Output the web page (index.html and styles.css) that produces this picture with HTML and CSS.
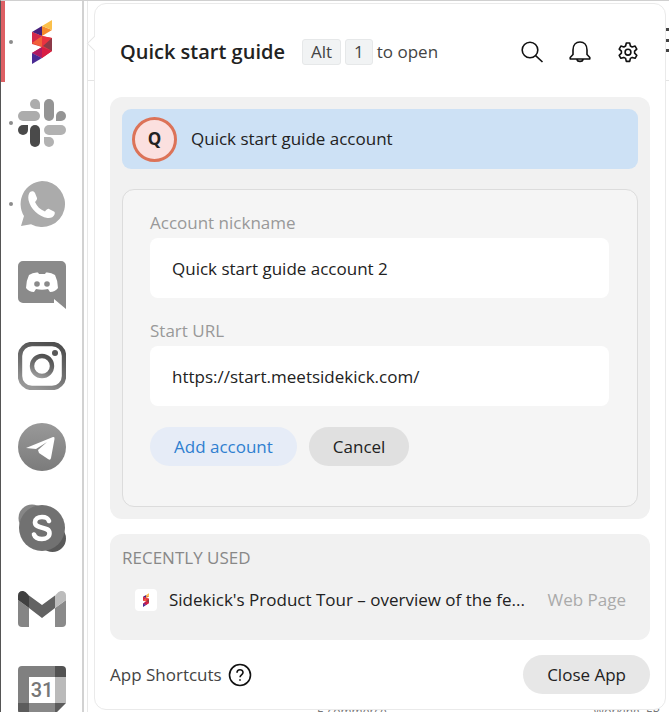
FILE: index.html
```html
<!DOCTYPE html>
<html lang="en">
<head>
    <meta charset="UTF-8">
    <meta name="viewport" content="width=device-width, initial-scale=1.0">
    <title>Quick start guide</title>
    <link rel="stylesheet" href="styles.css">
</head>
<body>
    <!-- shared logo shape -->
    <svg class="defs" aria-hidden="true">
        <symbol id="sidekick" viewBox="0 0 20 44">
            <path fill="#e03a3f" d="M0 12 10 16 20 18V31L10 38 0 33 10 27 0 24z"/>
            <path fill="#47207c" d="M0 12 10 6V16z"/>
            <path fill="#f58a2c" d="M10 6 20 10 10 16z"/>
            <path fill="#fbc04a" d="M10 6 20 0V10z"/>
            <path fill="#d3284a" d="M0 12 10 16 0 23z"/>
            <path fill="#f2603a" d="M10 16V27L0 23z"/>
            <path fill="#ea3340" d="M10 16 20 18 10 27z"/>
            <path fill="#8b3a48" d="M20 18V31L11 26z"/>
            <path fill="#d91c44" d="M10 27 20 31 10 38z"/>
            <path fill="#b01a62" d="M10 27V38L0 33z"/>
            <path fill="#4a2a94" d="M0 33 10 38 0 44z"/>
        </symbol>
    </svg>

    <nav class="rail" aria-label="Apps">
        <a class="app active open" href="#" aria-label="Quick start guide">
            <svg class="app-icon" viewBox="0 0 48 48"><use href="#sidekick" x="14" y="2" width="20" height="44"/></svg>
        </a>
        <a class="app open" href="#" aria-label="Slack">
            <svg class="app-icon" viewBox="0 0 48 48">
                <path fill="#acacac" d="M17 0a5 5 0 0 0 0 10h5V5a5 5 0 0 0-5-5z"/>
                <rect fill="#acacac" y="12" width="22" height="10" rx="5"/>
                <rect fill="#949494" x="26" width="10" height="22" rx="5"/>
                <path fill="#949494" d="M48 17a5 5 0 0 0-10 0v5h5a5 5 0 0 0 5-5z"/>
                <path fill="#4a4a4a" d="M0 31a5 5 0 0 0 10 0v-5H5a5 5 0 0 0-5 5z"/>
                <rect fill="#4a4a4a" x="12" y="26" width="10" height="22" rx="5"/>
                <rect fill="#b2b2b2" x="26" y="26" width="22" height="10" rx="5"/>
                <path fill="#b2b2b2" d="M31 48a5 5 0 0 0 0-10h-5v5a5 5 0 0 0 5 5z"/>
            </svg>
        </a>
        <a class="app open" href="#" aria-label="WhatsApp">
            <svg class="app-icon" viewBox="0 0 48 48">
                <path fill="#ababab" d="M24 1a23 23 0 1 1-11 43.200L3 46l3-10A23 23 0 0 1 24 1z"/>
                <path fill="#fff" d="M12 12c2-1.500 4-1 5 1l2 5c.4 1-.5 2.500-2 4 2 4.500 5 7.500 10 9.500 1.500-2 3-3 4-2.600l5 2.500c1 .6 1 1.600.5 3-1 2.600-4 4-7 3.500-9-1.500-17-9-19-18-.6-3 .1-6.500 1.500-7.900z"/>
            </svg>
        </a>
        <a class="app" href="#" aria-label="Discord">
            <svg class="app-icon" viewBox="0 0 48 48">
                <path fill="#8a8a8a" d="M5 0h38a5 5 0 0 1 5 5v43L36 38v4H5a5 5 0 0 1-5-5V5a5 5 0 0 1 5-5z"/>
                <path fill="#fff" d="M11 14q4-3 9-2.500l1 1.500h6l1-1.500q5-.5 9 2.500 3 6 3 13-3 4-8 4l-2-3q-6 1.500-12 0l-2 3q-5 0-8-4 0-7 3-13z"/>
                <circle fill="#8a8a8a" cx="19" cy="23" r="2.800"/>
                <circle fill="#8a8a8a" cx="29" cy="23" r="2.800"/>
            </svg>
        </a>
        <a class="app" href="#" aria-label="Instagram">
            <svg class="app-icon" viewBox="0 0 48 48">
                <defs>
                    <linearGradient id="insta" x1="0.700" y1="0" x2="0.300" y2="1">
                        <stop offset="0" stop-color="#505050"/>
                        <stop offset="0.600" stop-color="#727272"/>
                        <stop offset="1" stop-color="#989898"/>
                    </linearGradient>
                </defs>
                <rect x="2" y="2" width="44" height="44" rx="12" fill="none" stroke="url(#insta)" stroke-width="4.400"/>
                <circle cx="24" cy="24" r="10" fill="none" stroke="url(#insta)" stroke-width="4.400"/>
                <circle cx="37" cy="11" r="3" fill="#585858"/>
            </svg>
        </a>
        <a class="app" href="#" aria-label="Telegram">
            <svg class="app-icon" viewBox="0 0 48 48">
                <defs>
                    <linearGradient id="tele" x1="0" y1="0" x2="0" y2="1">
                        <stop offset="0" stop-color="#999"/>
                        <stop offset="1" stop-color="#7b7b7b"/>
                    </linearGradient>
                </defs>
                <circle cx="24" cy="24" r="24" fill="url(#tele)"/>
                <path fill="#fff" d="M8 25 35 14q2-.4 1.500 2L33 35q-.6 3-3 1l-9-6-1-3 9-8-11 7z"/>
            </svg>
        </a>
        <a class="app" href="#" aria-label="Skype">
            <svg class="app-icon" viewBox="0 0 48 48">
                <circle cx="14" cy="14" r="13.500" fill="#868686"/>
                <circle cx="34.500" cy="34.500" r="13.500" fill="#595959"/>
                <circle cx="24" cy="24" r="23" fill="#717171"/>
                <path fill="none" stroke="#fff" stroke-width="4.600" stroke-linecap="round" d="M31 17c-1-3-4-4-7-4-4 0-7 2-7 5.200 0 7.800 14.500 3.200 14.500 11 0 3.600-3.500 5.800-7.500 5.800s-7-1.500-8-4.500"/>
            </svg>
        </a>
        <a class="app" href="#" aria-label="Gmail">
            <svg class="app-icon" viewBox="0 0 48 48">
                <path fill="#858585" d="M0 15l11 8v19H4a4 4 0 0 1-4-4z"/>
                <path fill="#8a8a8a" d="M48 15l-11 8v19h7a4 4 0 0 0 4-4z"/>
                <path fill="#626262" d="M11 10.500 24 20l13-9.500V23L24 33 11 23z"/>
                <path fill="#404040" d="M0 15v-4.500C0 6 5 4.500 8.500 8L11 10.500V23z"/>
                <path fill="#bcbcbc" d="M48 15v-4.500C48 6 43 4.500 39.500 8L37 10.500V23z"/>
            </svg>
        </a>
        <a class="app" href="#" aria-label="Google Calendar">
            <svg class="app-icon" viewBox="0 0 48 48">
                <path fill="#808080" d="M4 0h33v11H11v26H0V4a4 4 0 0 1 4-4z"/>
                <path fill="#525252" d="M37 0h7a4 4 0 0 1 4 4v7H37z"/>
                <path fill="#bababa" d="M37 11h11v26H37z"/>
                <path fill="#888" d="M11 37h26v11H11z"/>
                <path fill="#5c5c5c" d="M0 37h11v11H4a4 4 0 0 1-4-4zM37 37h11L37 48z"/>
                <text class="cal-day" x="24" y="31" text-anchor="middle">31</text>
            </svg>
        </a>
    </nav>

    <main class="window">
        <div class="toolbar">
            <svg class="grip" viewBox="0 0 3 26"><path fill="#444" d="M0 0h3v3H0zM0 11h3v3H0zM0 21h3v3H0z"/></svg>
        </div>
        <div class="page">
            <span>E-commerce</span>
            <span>Working, ER</span>
        </div>

        <section class="popover" aria-label="Quick start guide">
            <header class="popover-header">
                <h1>Quick start guide</h1>
                <p class="shortcut"><kbd>Alt</kbd><kbd>1</kbd>to open</p>
                <div class="actions">
                    <button type="button" aria-label="Search">
                        <svg viewBox="0 0 24 24"><circle cx="10" cy="10" r="7.800"/><path d="M15.600 15.600 22.500 22"/></svg>
                    </button>
                    <button type="button" aria-label="Notifications">
                        <svg viewBox="0 0 24 24"><path d="M2.200 19h19.600v-1.500L19 14.500V10c0-5-3-8-7-8s-7 3-7 8v4.500l-2.800 3zM9 19.500c.5 2.500 5.500 2.500 6 0"/></svg>
                    </button>
                    <button type="button" aria-label="Settings">
                        <svg viewBox="0 0 24 24"><path d="M10.300 3h3.400l.7 3 1.800 1 2.900-.9 1.700 3-2.200 2.100v2l2.200 2.100-1.700 3-2.900-.9-1.800 1-.7 3h-3.400l-.7-3-1.800-1-2.900.9-1.700-3 2.200-2.100v-2L3.200 9.100l1.700-3 2.900.9 1.800-1z"/><circle cx="12" cy="12.200" r="2.900"/></svg>
                    </button>
                </div>
            </header>

            <div class="card accounts">
                <button type="button" class="account">
                    <span class="avatar">Q</span>
                    Quick start guide account
                </button>

                <form class="account-form">
                    <label for="nickname">Account nickname</label>
                    <input type="text" id="nickname" value="Quick start guide account 2">
                    <label for="url">Start URL</label>
                    <input type="text" id="url" value="https://start.meetsidekick.com/">
                    <div class="form-buttons">
                        <button type="button" class="btn btn-primary">Add account</button>
                        <button type="button" class="btn btn-dark">Cancel</button>
                    </div>
                </form>
            </div>

            <div class="card recent">
                <h2>RECENTLY USED</h2>
                <a class="recent-item" href="#">
                    <span class="favicon"><svg viewBox="0 0 20 44"><use href="#sidekick"/></svg></span>
                    <span class="recent-title">Sidekick's Product Tour – overview of the fe...</span>
                    <span class="recent-type">Web Page</span>
                </a>
            </div>

            <footer class="popover-footer">
                <a class="shortcuts" href="#">App Shortcuts
                    <svg viewBox="0 0 24 24"><circle cx="12" cy="12" r="10.500"/><path d="M9 9.800c0-4 6-4 6-.3 0 2.300-3 2.300-3 4.700"/><path d="M12 16.200v1.600"/></svg>
                </a>
                <button type="button" class="btn">Close App</button>
            </footer>
        </section>
    </main>
</body>
</html>
```

FILE: styles.css
```css
* {
    box-sizing: border-box;
}

body {
    margin: 0;
    height: 100vh;
    display: flex;
    overflow: hidden;
    background: #fff;
    border-top: 1px solid #d0d0d0;
    border-left: 1px solid #555;
    color: #222;
    font-family: "Open Sans", "Noto Sans", sans-serif;
    font-size: 17px;
    font-weight: 400;
    line-height: 24px;
}

button,
input {
    font: inherit;
    color: inherit;
    border: 0;
}

button {
    cursor: pointer;
}

a {
    color: inherit;
    text-decoration: none;
}

.defs {
    display: none;
}

/* app rail */
.rail {
    width: 83px;
    flex: none;
    border-right: 2px solid #d2d2d2;
}

.app {
    position: relative;
    display: flex;
    align-items: center;
    justify-content: center;
    height: 81px;
}

.app.active {
    box-shadow: inset 4px 0 #dd6064;
}

.app.open::before {
    content: "";
    position: absolute;
    left: 8px;
    width: 4px;
    height: 4px;
    border-radius: 50%;
    background: #8c8c8c;
}

.app-icon {
    width: 48px;
    height: 48px;
}

.cal-day {
    font: 500 20px Roboto, sans-serif;
    fill: #777;
}

/* window behind the popover */
.window {
    position: relative;
    flex: 1;
    min-width: 0;
    display: flex;
    flex-direction: column;
    padding-left: 3px;
}

.toolbar {
    display: flex;
    align-items: center;
    justify-content: flex-end;
    height: 80px;
    border-left: 1px solid #e8e8e8;
    border-bottom: 1px solid #e4e4e4;
}

.grip {
    width: 3px;
    height: 26px;
}

.page {
    flex: 1;
    display: flex;
    align-items: flex-end;
    justify-content: space-between;
    padding: 0 9px 0 229px;
    margin-bottom: -12px;
    border-left: 1px solid #e8e8e8;
    color: #777;
    font-size: 12px;
}

/* popover */
.popover {
    position: absolute;
    top: 2px;
    left: 10px;
    right: 3px;
    padding: 24px 15px 15px;
    background: #fff;
    border: 1px solid #eaeaea;
    border-radius: 12px;
}

.popover::before {
    content: "";
    position: absolute;
    top: 34px;
    left: -6px;
    width: 10px;
    height: 10px;
    background: #fff;
    border: solid #e6e6e6;
    border-width: 0 0 1px 1px;
    transform: rotate(45deg);
}

.popover-header {
    display: flex;
    align-items: center;
    height: 48px;
    padding: 0 10px;
    margin-bottom: 21px;
}

h1 {
    margin: 0 17px 0 0;
    font-size: 20px;
    font-weight: 600;
}

.shortcut {
    display: flex;
    align-items: center;
    gap: 4px;
    margin: 0;
    color: #444;
}

kbd {
    padding: 0 8px;
    border: 1px solid #e6e8e9;
    border-radius: 3px;
    background: #f1f3f4;
    font: inherit;
}

.actions {
    display: flex;
    gap: 24px;
    margin-left: auto;
}

.actions button {
    width: 24px;
    height: 24px;
    padding: 0;
    background: none;
}

.actions svg,
.shortcuts svg {
    display: block;
    width: 24px;
    height: 24px;
    fill: none;
    stroke: #111;
    stroke-width: 1.6;
    stroke-linejoin: round;
}

.card {
    padding: 12px;
    border-radius: 12px;
    background: #f1f1f1;
}

.account {
    display: flex;
    align-items: center;
    gap: 14px;
    width: 100%;
    height: 60px;
    padding: 0 10px;
    margin-bottom: 20px;
    border-radius: 9px;
    background: #cde1f5;
}

.avatar {
    display: flex;
    align-items: center;
    justify-content: center;
    width: 45px;
    height: 45px;
    border: 3px solid #dc7358;
    border-radius: 50%;
    background: #fbe0df;
    font-weight: 700;
}

.account-form {
    padding: 21px 28px 40px 27px;
    border: 1px solid #dcdcdc;
    border-radius: 12px;
    background: #f5f5f5;
}

.account-form label {
    display: block;
    margin-bottom: 3px;
    color: #999;
}

.account-form input {
    display: block;
    width: 100%;
    height: 60px;
    padding: 0 22px;
    margin-bottom: 21px;
    border-radius: 8px;
    background: #fff;
}

.form-buttons {
    display: flex;
    gap: 12px;
}

.btn {
    height: 39px;
    padding: 0 24px;
    border-radius: 20px;
    background: #e7e7e7;
}

.btn-primary {
    background: #e6ecf7;
    color: #2f7fd0;
}

.btn-dark {
    background: #e0e0e0;
}

.recent {
    margin: 15px 0;
    padding-bottom: 28px;
}

h2 {
    margin: 0 0 18px;
    color: #888;
    font-size: 17px;
    font-weight: 400;
}

.recent-item {
    display: flex;
    align-items: center;
    padding: 0 12px 0 13px;
}

.favicon {
    display: flex;
    align-items: center;
    justify-content: center;
    flex: none;
    width: 22px;
    height: 22px;
    margin-right: 12px;
    border-radius: 4px;
    background: #fff;
}

.favicon svg {
    height: 14px;
}

.recent-title {
    flex: 1;
    min-width: 0;
    overflow: hidden;
    white-space: nowrap;
    text-overflow: ellipsis;
}

.recent-type {
    margin-left: 18px;
    color: #aaa;
}

.popover-footer {
    display: flex;
    align-items: center;
    justify-content: space-between;
}

.shortcuts {
    display: flex;
    align-items: center;
    gap: 6px;
    color: #444;
}
```
